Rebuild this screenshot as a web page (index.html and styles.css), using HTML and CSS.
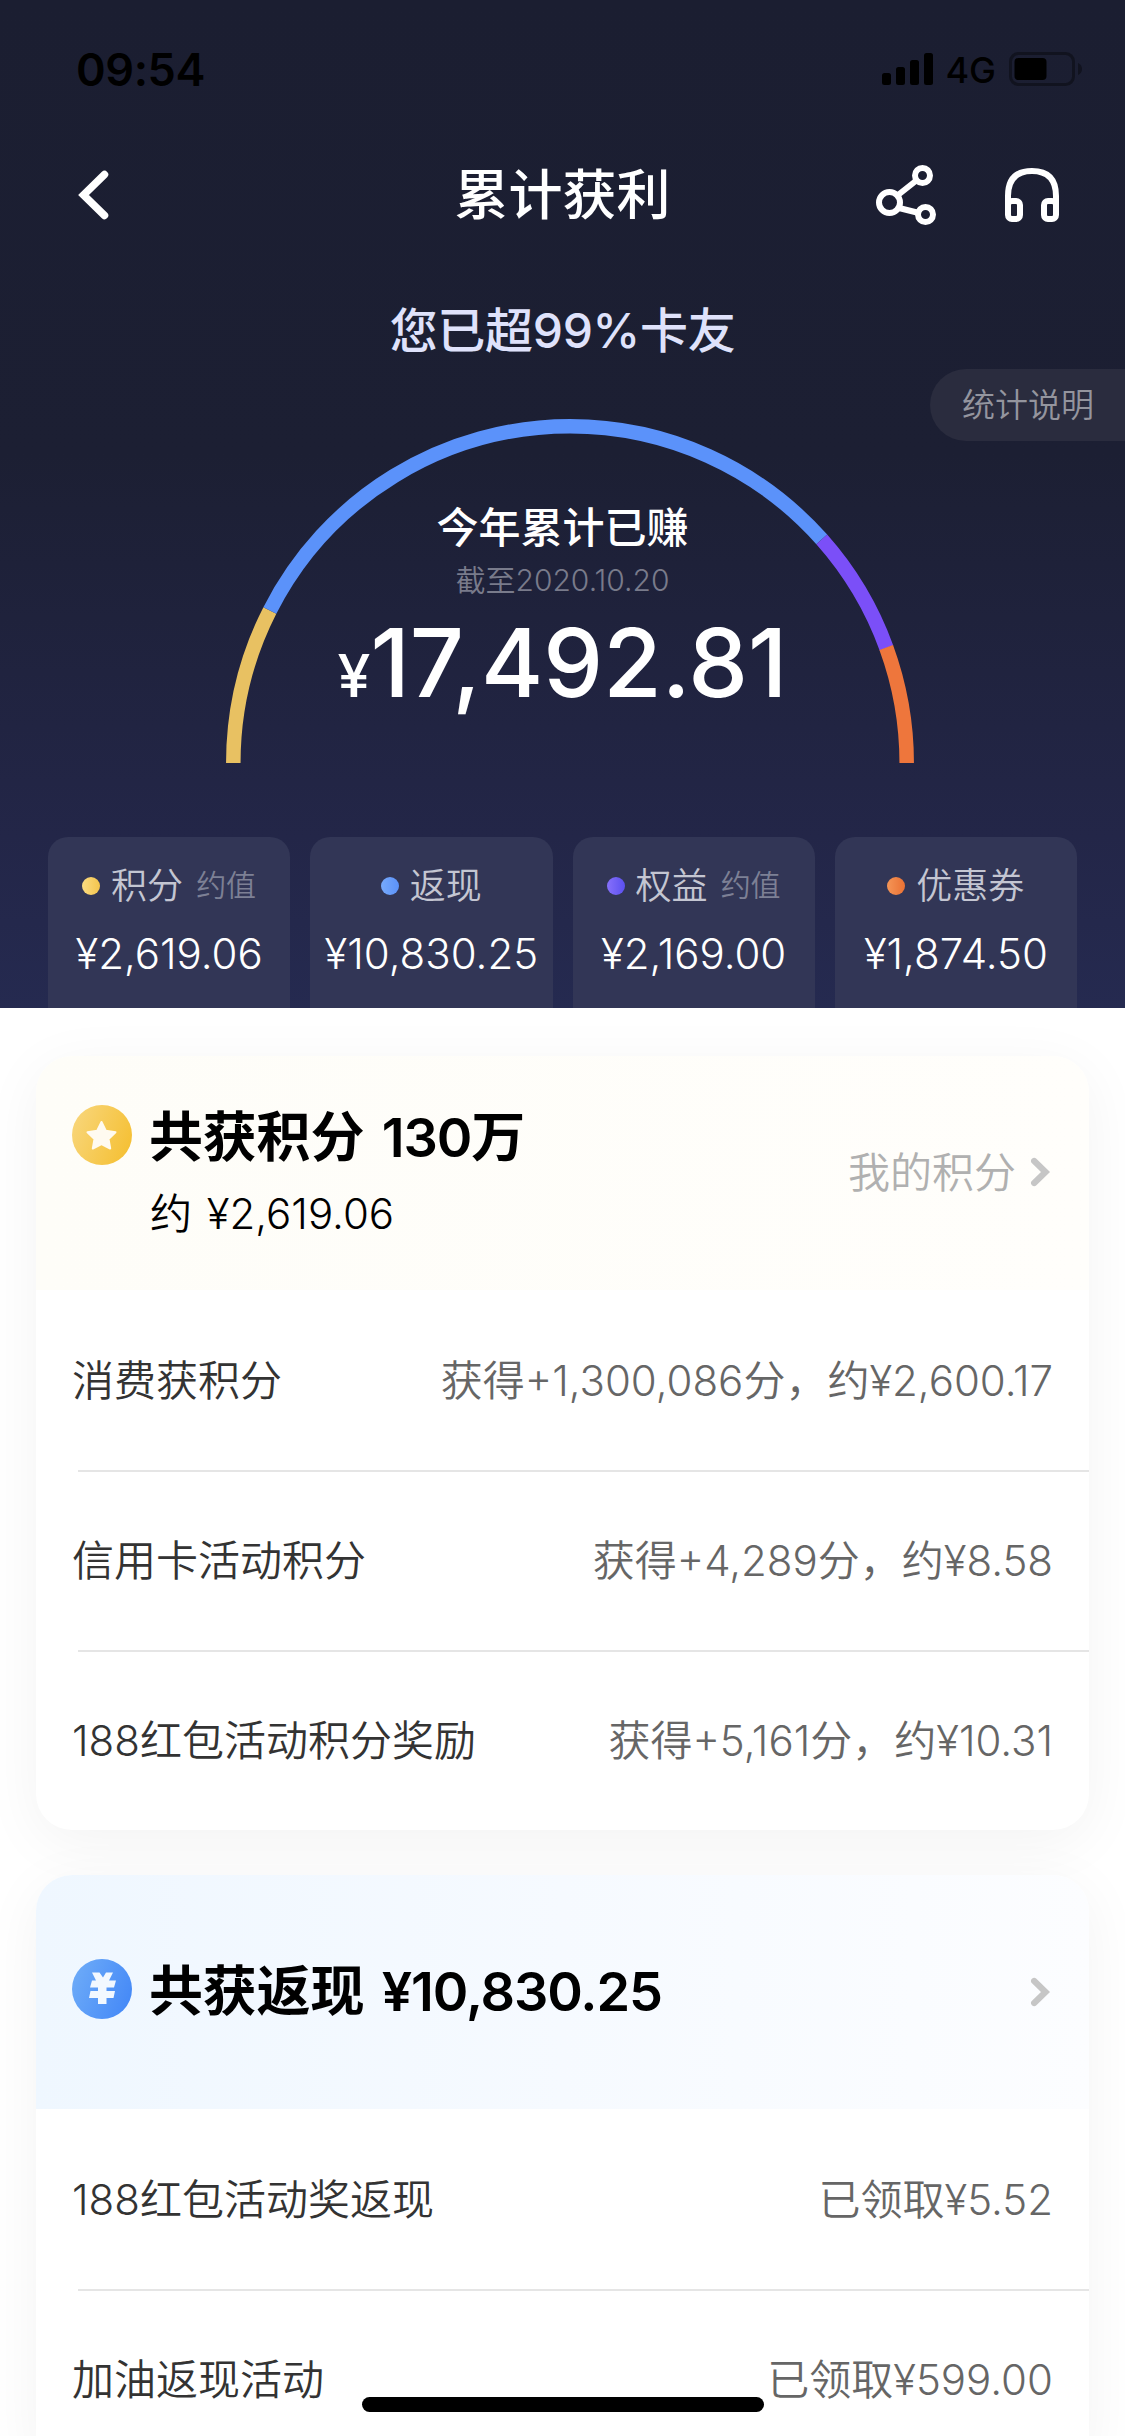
FILE: index.html
```html
<!DOCTYPE html>
<html lang="zh-CN">
<head>
<meta charset="utf-8">
<title>累计获利</title>
<link rel="stylesheet" href="styles.css">
</head>
<body>
<div class="screen">
  <section class="hero">
    <div class="status">
      <span class="time">09:54</span>
      <div class="status-right">
        <svg class="signal" width="52" height="32" viewBox="0 0 52 32"><rect x="0" y="20" width="9" height="12" rx="2.5"/><rect x="14" y="14" width="9" height="18" rx="2.5"/><rect x="28" y="7" width="9" height="25" rx="2.5"/><rect x="42" y="0" width="9" height="32" rx="2.5"/></svg>
        <span class="net">4G</span>
        <svg class="battery" width="74" height="34" viewBox="0 0 74 34"><rect x="1.5" y="1.5" width="63" height="31" rx="8" fill="none" stroke="#11131f" stroke-width="3"/><rect x="5.500" y="6" width="32" height="22" rx="4"/><path d="M69 11q4 2 4 6t-4 6z" fill="#11131f"/></svg>
      </div>
    </div>
    <div class="nav">
      <svg class="back" width="32" height="50" viewBox="0 0 32 50"><path d="M26.500 4.500 5.500 25l21 20.500" fill="none" stroke="#fff" stroke-width="7.500" stroke-linecap="round" stroke-linejoin="miter"/></svg>
      <h1 class="title">累计获利</h1>
      <div class="nav-actions">
        <svg width="60" height="60" viewBox="0 0 60 60" fill="none" stroke="#fff"><circle cx="13.500" cy="37.500" r="10.500" stroke-width="6"/><circle cx="46.500" cy="10.500" r="7.500" stroke-width="6"/><circle cx="49.500" cy="49.500" r="7.500" stroke-width="6"/><path d="M22 30 41 15M23 43l20 5" stroke-width="6"/></svg>
        <svg width="54" height="54" viewBox="0 0 54 54" fill="none" stroke="#fff" stroke-width="6"><path d="M3 41V28Q3 3 27 3T51 28V41"/><rect x="3" y="33" width="12" height="18" rx="4"/><rect x="39" y="33" width="12" height="18" rx="4"/></svg>
      </div>
    </div>
    <p class="rank">您已超99%卡友</p>
    <div class="explain">统计说明</div>
    <div class="gauge">
      <svg class="arc" width="688" height="345" viewBox="0 0 688 345" fill="none" stroke-width="14.500">
        <path pathLength="17492.810" stroke="#e8c162" stroke-dasharray="2619.060 20000" d="M7.300 345A336.700 336.700 0 0 1 680.700 345"/>
        <path pathLength="17492.810" stroke="#5b92fa" stroke-dasharray="10830.250 20000" stroke-dashoffset="-2619.060" d="M7.300 345A336.700 336.700 0 0 1 680.700 345"/>
        <path pathLength="17492.810" stroke="#7b4ff8" stroke-dasharray="2100 20000" stroke-dashoffset="-13449.310" d="M7.300 345A336.700 336.700 0 0 1 680.700 345"/>
        <path pathLength="17492.810" stroke="#ee763c" stroke-dasharray="1960 20000" stroke-dashoffset="-15540" d="M7.300 345A336.700 336.700 0 0 1 680.700 345"/>
      </svg>
      <div class="gauge-text">
        <p class="earned">今年累计已赚</p>
        <p class="until">截至<span class="date">2020.10.20</span></p>
        <p class="total"><span class="yen">¥</span><span class="sum">17,492.81</span></p>
      </div>
    </div>
    <div class="tabs">
      <div class="tab"><p class="tab-name"><i class="dot gold"></i>积分<small>约值</small></p><p class="tab-value">¥2,619.06</p></div>
      <div class="tab"><p class="tab-name"><i class="dot blue"></i>返现</p><p class="tab-value">¥10,830.25</p></div>
      <div class="tab"><p class="tab-name"><i class="dot violet"></i>权益<small>约值</small></p><p class="tab-value">¥2,169.00</p></div>
      <div class="tab"><p class="tab-name"><i class="dot orange"></i>优惠券</p><p class="tab-value">¥1,874.50</p></div>
    </div>
  </section>
  <main class="cards">
    <section class="card">
      <header class="head head-gold">
        <svg class="badge" width="60" height="60" viewBox="0 0 60 60"><defs><linearGradient id="g" x1="0" y1="0.300" x2="1" y2="0.700"><stop stop-color="#f8d578"/><stop offset="1" stop-color="#f5c034"/></linearGradient></defs><circle cx="30" cy="30" r="30" fill="url(#g)"/><path d="M29.500 17 33.800 25.800 43.500 27.200 36.500 34 38.200 43.500 29.500 39 20.800 43.500 22.500 34 15.500 27.200 25.200 25.800Z" fill="#fffaf0" stroke="#fffaf0" stroke-width="2" stroke-linejoin="round"/></svg>
        <div class="head-text"><h2>共获积分 <span class="h-num">130</span>万</h2><p class="approx">约 <span class="approx-num">¥2,619.06</span></p></div>
        <div class="link">我的积分<svg class="chev" width="21" height="32" viewBox="0 0 21 32"><path d="M4.200 5 15.500 16 4.200 27" fill="none" stroke="#c6c6c6" stroke-width="6.300" stroke-linecap="round"/></svg></div>
      </header>
      <div class="row"><span class="label">消费获积分</span><span class="value">获得+1,300,086分，约¥2,600.17</span></div>
      <div class="row"><span class="label">信用卡活动积分</span><span class="value">获得+4,289分，约¥8.58</span></div>
      <div class="row"><span class="label">188红包活动积分奖励</span><span class="value">获得+5,161分，约¥10.31</span></div>
    </section>
    <section class="card">
      <header class="head head-blue">
        <svg class="badge" width="60" height="60" viewBox="0 0 60 60"><defs><linearGradient id="b" x1="0" y1="0.300" x2="1" y2="0.700"><stop stop-color="#6caaf8"/><stop offset="1" stop-color="#4589f7"/></linearGradient></defs><circle cx="30" cy="30" r="30" fill="url(#b)"/><path d="M20 13.500H27.500L31 18.500 34 13.500H41L37 21.500H44L42 28.500H34.500V32H43L41.500 39H34.500V45H26V39H17L18.500 32H26V28.500H18L20 21.500H24Z" fill="#f2f8ff"/></svg>
        <div class="head-text"><h2>共获返现 <span class="h-num">¥10,830.25</span></h2></div>
        <div class="link"><svg class="chev" width="21" height="32" viewBox="0 0 21 32"><path d="M4.200 5 15.500 16 4.200 27" fill="none" stroke="#c6c6c6" stroke-width="6.300" stroke-linecap="round"/></svg></div>
      </header>
      <div class="row"><span class="label">188红包活动奖返现</span><span class="value">已领取¥5.52</span></div>
      <div class="row"><span class="label">加油返现活动</span><span class="value">已领取¥599.00</span></div>
    </section>
  </main>
  <div class="home-bar"></div>
</div>
</body>
</html>
```
FILE: styles.css
```css
* { box-sizing: border-box; margin: 0; padding: 0; }
body { width: 1125px; height: 2436px; overflow: hidden; background: #fff; font-family: Inter, "Noto Sans CJK SC", sans-serif; font-weight: 350; }
svg { display: block; flex: none; }
.screen { position: relative; width: 1125px; height: 2436px; overflow: hidden; display: flex; flex-direction: column; }

.hero { position: relative; height: 1008px; flex: none; display: flex; flex-direction: column; background: linear-gradient(#1b1e31 0, #1c1f33 45%, #232648 83%, #252a50 100%); }
.status { height: 138px; padding: 0 42px 0 76px; display: flex; justify-content: space-between; align-items: center; color: #000; }
.time { font-size: 45px; font-weight: 600; letter-spacing: -0.4px; }
.status-right { display: flex; align-items: center; }
.net { font-size: 36px; font-weight: 500; margin: 2px 13px 0 11px; }
.nav { height: 114px; padding: 0 66px; display: grid; grid-template-columns: 1fr auto 1fr; align-items: center; }
.back { margin-left: 12px; }
.title { padding-top: 2px; font-size: 54px; line-height: 80px; font-weight: 500; color: #fff; }
.nav-actions { display: flex; justify-content: flex-end; align-items: center; gap: 69px; }
.rank { margin-top: 44px; text-align: center; font-size: 48px; line-height: 70px; font-weight: 500; letter-spacing: -0.3px; color: #dfe2fb; }
.explain { position: absolute; right: 0; top: 369px; width: 195px; height: 72px; padding-left: 32px; border-radius: 36px 0 0 36px; background: #2a2c3e; color: #94959e; font-size: 33px; line-height: 72px; }
.gauge { position: relative; width: 688px; height: 345px; margin: 52px 0 0 226px; }
.gauge-text { position: absolute; left: -226px; top: 0; width: 1125px; padding-top: 82px; text-align: center; }
.earned { font-size: 42px; line-height: 56px; font-weight: 500; color: #fff; }
.until { margin-top: 4px; font-size: 30px; line-height: 40px; color: #797b8b; }
.total { margin-top: 13px; line-height: 100px; color: #fff; font-weight: 500; white-space: nowrap; }
.yen { font-size: 59px; }
.sum { font-size: 95px; }
.tabs { display: flex; gap: 20px; margin-top: 74px; padding: 0 48px; flex: 1; }
.tab { flex: 1 1 0; min-width: 0; border-radius: 20px 20px 0 0; background: #323656; text-align: center; padding-top: 21px; }
.tab-name { display: flex; justify-content: center; align-items: center; height: 50px; font-size: 36px; color: #c4c6d2; }
.tab-name small { font-size: 30px; margin-left: 13px; color: #7d8095; }
.dot { width: 18px; height: 18px; border-radius: 50%; margin: 6px 11px 0 0; }
.gold { background: linear-gradient(90deg, #fbdc82, #f3c44c); }
.blue { background: linear-gradient(90deg, #77a9fa, #5b92fa); }
.violet { background: linear-gradient(90deg, #8670fb, #5b50f0); }
.orange { background: linear-gradient(90deg, #f59556, #ea7134); }
.tab-value { margin-top: 21px; font-size: 42px; line-height: 50px; color: #fff; white-space: nowrap; }

.cards { padding: 48px 36px 0; display: flex; flex-direction: column; gap: 45px; }
.card { border-radius: 36px; background: #fff; box-shadow: 0 12px 60px rgba(0, 0, 0, .05); }
.head { display: flex; align-items: flex-start; border-radius: 36px 36px 0 0; height: 234px; padding: 49px 36px 0; }
.head-gold { background: linear-gradient(90deg, #fefdf8, #fffefb); }
.head-blue { background: linear-gradient(90deg, #eff7ff, #f6faff 50%, #fcfdff); align-items: center; padding: 0 36px 6px; }
.head-text { margin-left: 17px; flex: 1; white-space: nowrap; }
.head h2 { font-size: 54px; line-height: 66px; font-weight: 700; letter-spacing: -0.2px; color: #000; }
.h-num { font-weight: 600; margin-left: 5px; letter-spacing: -1.1px; }
.head-blue h2 { margin-top: 5px; }
.approx { margin-top: 18px; padding-left: 1px; font-size: 42px; line-height: 50px; color: #000; }
.approx-num { margin-left: 3px; }
.link { display: flex; align-items: center; margin-right: 2px; font-size: 42px; color: #b0b0b0; gap: 14px; }
.head-gold .link { margin-top: 34px; }
.head-gold .chev { margin-top: 5px; }
.head-blue .link { margin-top: 6px; }
.row { display: flex; justify-content: space-between; align-items: center; height: 180px; padding: 0 36px 6px; font-size: 42px; color: #333; white-space: nowrap; }
.row + .row { background: linear-gradient(#e5e5e5, #e5e5e5) 42px 0 / 100% 2px no-repeat; }
.value { color: #666; }
.home-bar { position: absolute; left: 362px; bottom: 24px; width: 402px; height: 15px; border-radius: 8px; background: #000; }
```
